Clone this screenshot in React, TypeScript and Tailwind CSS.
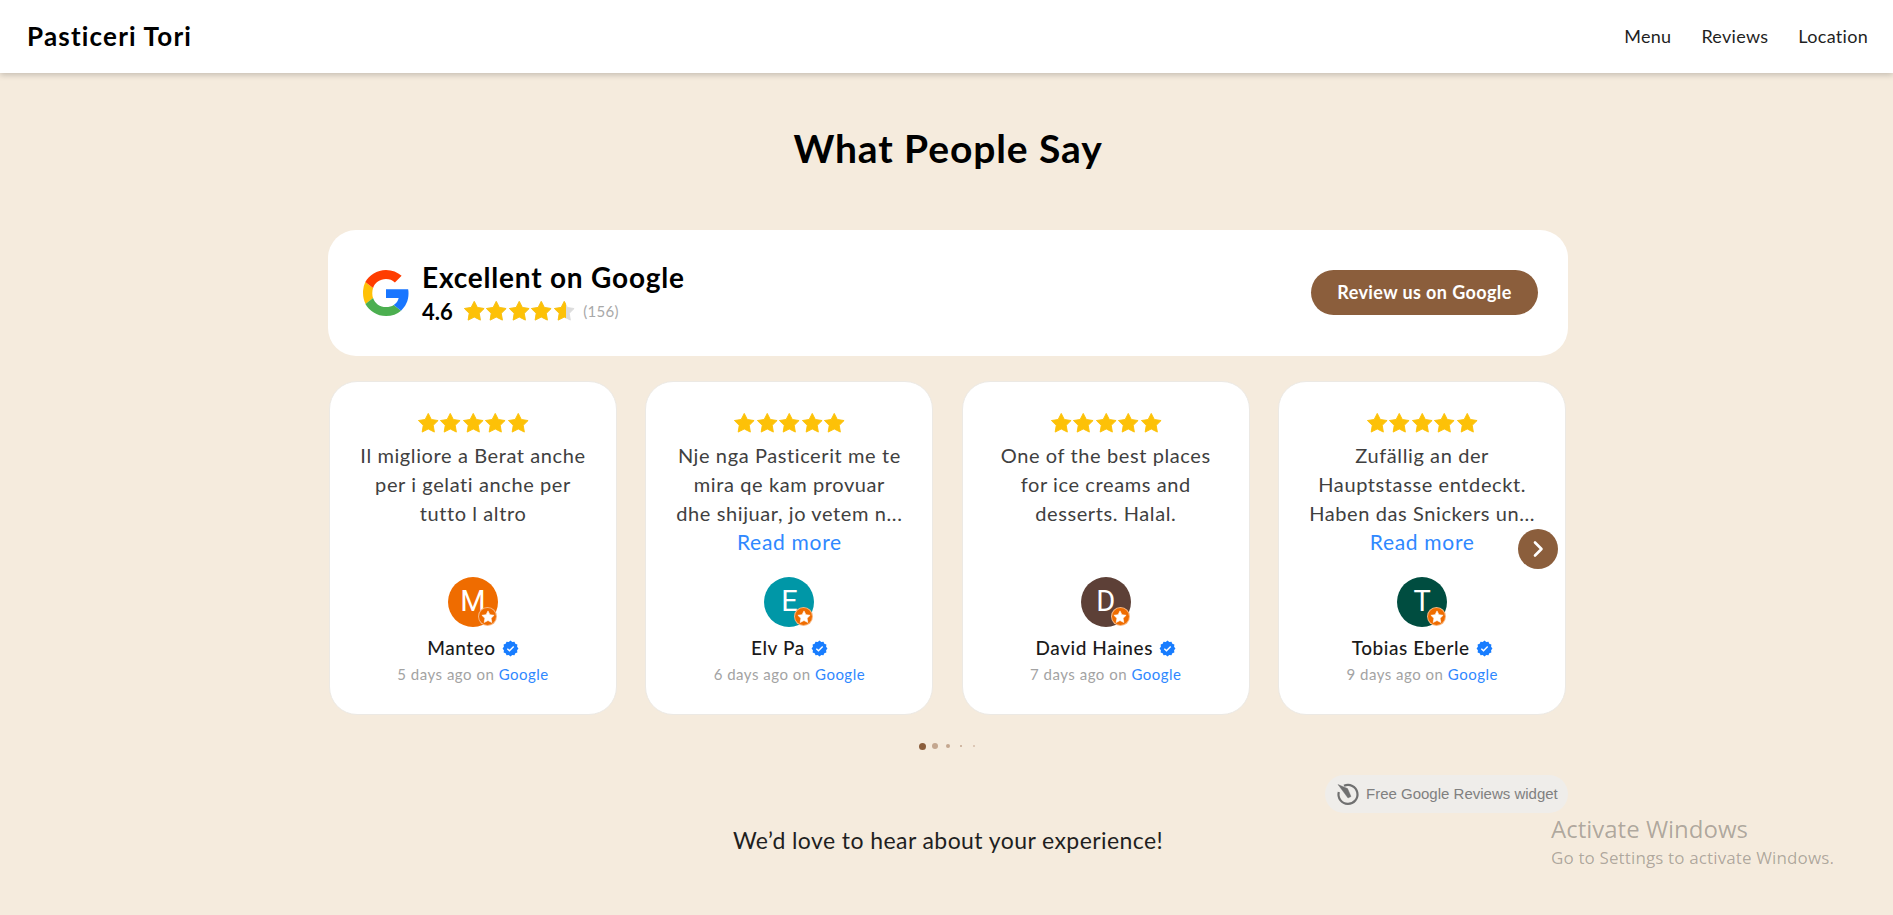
const F = "font-['Lato','Noto_Sans',sans-serif]";

function Star({ className = "" }: { className?: string }) {
  return (
    <svg viewBox="0 0 24 24" className={className} aria-hidden="true">
      <path
        d="M12 1.500L15.290 7.970 22.500 9.100 17.330 14.230 18.500 21.400 12 18.100 5.500 21.400 6.670 14.230 1.500 9.100 8.710 7.970z"
        fill="currentColor"
        stroke="currentColor"
        strokeWidth="1"
        strokeLinejoin="round"
      />
    </svg>
  );
}

function Stars() {
  return (
    <div className="flex justify-center text-[#fdc107] h-[24px]">
      {[0, 1, 2, 3, 4].map((i) => (
        <Star key={i} className="w-[22.500px] h-[22.500px]" />
      ))}
    </div>
  );
}

function GoogleG() {
  return (
    <svg viewBox="0 0 48 48" className="w-[46px] h-[46px] shrink-0">
      <path fill="#FFC107" d="M10.500 29.200A14.400 14.400 0 0 1 9.700 24c0-1.800.3-3.600.8-5.200L2.400 12.500A24 24 0 0 0 0 24c0 4.100 1 8 2.700 11.500z" />
      <path fill="#FF3D00" d="M24 9.500c3.600 0 6.800 1.200 9.300 3.600l7-7C36 2.300 30.500 0 24 0 14.600 0 6.500 5.400 2.400 12.500l8.100 6.300C12.400 13.300 17.700 9.500 24 9.500z" />
      <path fill="#4CAF50" d="M24 48c6.300 0 11.700-2 15.700-5.600l-7.600-5.900c-2.100 1.400-4.900 2.200-8.100 2.200-6.300 0-11.600-3.700-13.500-9.500l-8 6.200C6.500 42.400 14.600 48 24 48z" />
      <path fill="#1976FF" d="M47.500 24.500c0-1.600-.1-3.100-.4-4.500H24v9.100h13.200c-.6 3-2.300 5.500-5.100 7.400l7.600 5.900c4.500-4.100 7.800-10.200 7.800-17.900z" />
    </svg>
  );
}

function Verified() {
  return (
    <svg viewBox="0 0 24 24" className="w-[17px] h-[17px] shrink-0">
      <path
        fill="#187dff"
        d="M12 .8l2.500 1.900 3.100-.4 1.200 2.900 2.900 1.200-.4 3.100 1.900 2.500-1.900 2.500.4 3.100-2.900 1.200-1.200 2.900-3.100-.4-2.500 1.900-2.500-1.900-3.100.4-1.200-2.900-2.900-1.200.4-3.100L.8 12l1.900-2.500-.4-3.100 2.900-1.200 1.200-2.900 3.100.4z"
      />
      <path d="M7.500 12.300l3.100 3 5.900-6" fill="none" stroke="#fff" strokeWidth="2" />
    </svg>
  );
}

type R = { name: string; initial: string; color: string; when: string; lines: string[]; more?: boolean };

const reviews: R[] = [
  { name: "Manteo", initial: "M", color: "bg-[#ef6c00]", when: "5 days ago", lines: ["Il migliore a Berat anche", "per i gelati anche per", "tutto l altro"] },
  { name: "Elv Pa", initial: "E", color: "bg-[#0097a7]", when: "6 days ago", lines: ["Nje nga Pasticerit me te", "mira qe kam provuar", "dhe shijuar, jo vetem n..."], more: true },
  { name: "David Haines", initial: "D", color: "bg-[#5d4037]", when: "7 days ago", lines: ["One of the best places", "for ice creams and", "desserts. Halal."] },
  { name: "Tobias Eberle", initial: "T", color: "bg-[#004d40]", when: "9 days ago", lines: ["Zufällig an der", "Hauptstasse entdeckt.", "Haben das Snickers un..."], more: true },
];

function Card({ r }: { r: R }) {
  return (
    <div className="w-[288px] h-[334px] bg-white rounded-[28px] border border-[#ece9e4] pt-[30px] flex flex-col items-center text-center">
      <Stars />
      <div className="mt-[5px] h-[87px] text-[20px] leading-[29px] text-[#404040] tracking-[0.6px] whitespace-nowrap">
        {r.lines.map((l) => (
          <div key={l}>{l}</div>
        ))}
      </div>
      <div className="h-[28px] text-[21px] leading-[28px] text-[#2f88ff] tracking-[0.7px]">{r.more ? "Read more" : ""}</div>
      <div className={`relative mt-[21px] w-[50px] h-[50px] rounded-full ${r.color} flex items-center justify-center font-['Roboto',sans-serif] text-white text-[29px]`}>
        {r.initial}
        <div className="absolute right-[1px] bottom-[1px] w-[19px] h-[19px] rounded-full bg-[#ef6c00] border border-[#ffffff80] flex items-center justify-center text-white">
          <Star className="w-[14px] h-[14px]" />
        </div>
      </div>
      <div className="mt-[9px] flex items-center gap-[6px] text-[19px] leading-[24px] font-medium text-[#1a1a1a] tracking-[0.55px]">
        {r.name}
        <Verified />
      </div>
      <div className="mt-[4px] text-[15px] leading-[20px] text-[#a3a3a3] tracking-[0.5px]">
        {r.when} on <span className="text-[#2f88ff]">Google</span>
      </div>
    </div>
  );
}

export default function App() {
  return (
    <div className={`${F} relative h-[915px] overflow-hidden bg-[#f5ebdd] text-black`}>
      <header className="h-[73px] bg-white shadow-[0_2px_6px_rgba(0,0,0,0.2)] flex items-center justify-between pl-[27px] pr-[25px]">
        <div className="text-[26px] font-bold tracking-[1.2px]">Pasticeri Tori</div>
        <nav className="flex gap-[30px] text-[18px] text-[#1f1f1f] tracking-[0.3px]">
          <span>Menu</span>
          <span>Reviews</span>
          <span>Location</span>
        </nav>
      </header>

      <main className="flex flex-col items-center pl-[3px]">
        <h1 className="mt-[53px] text-[39px] leading-[44px] font-bold tracking-[0.9px]">What People Say</h1>

        <div className="mt-[60px] w-[1240px] h-[126px] bg-white rounded-[28px] flex items-center justify-between pl-[35px] pr-[30px]">
          <div className="flex items-center gap-[13px]">
            <GoogleG />
            <div>
              <div className="text-[28px] leading-[32px] font-bold tracking-[0.8px]">Excellent on Google</div>
              <div className="flex items-center h-[32px] pt-[4px]">
                <span className="text-[22px] font-bold mr-[10px]">4.6</span>
                <div className="relative flex text-[#dcdcdc]">
                  {[0, 1, 2, 3, 4].map((i) => (
                    <Star key={i} className="w-[22.500px] h-[22.500px]" />
                  ))}
                  <div className="absolute left-0 top-0 w-[103px] overflow-hidden flex text-[#fdc107]">
                    {[0, 1, 2, 3, 4].map((i) => (
                      <Star key={i} className="w-[22.500px] h-[22.500px] shrink-0" />
                    ))}
                  </div>
                </div>
                <span className="ml-[8px] text-[15px] text-[#a8a8a8] tracking-[0.3px]">(156)</span>
              </div>
            </div>
          </div>
          <div className="w-[227px] h-[45px] -mt-[2px] rounded-full bg-[#8b5e3c] text-white text-[18px] font-bold flex items-center justify-center tracking-[0.4px]">
            Review us on Google
          </div>
        </div>

        <div className="relative mt-[25px] w-[1240px] h-[334px] flex px-[1px] gap-[28.400px]">
          {reviews.map((r) => (
            <Card key={r.name} r={r} />
          ))}
          <div className="absolute left-[1190px] top-[148px] w-[40px] h-[40px] rounded-full bg-[#8b5e3c] flex items-center justify-center">
            <svg viewBox="0 0 24 24" className="w-[24px] h-[24px]" fill="none" stroke="#fff" strokeWidth="2.600" strokeLinecap="round" strokeLinejoin="round">
              <path d="M9 5.500l6.500 6.500L9 18.500" />
            </svg>
          </div>
        </div>

        <div className="mt-[27px] flex items-center gap-[5px] h-[8px]">
          <span className="w-[8px] flex justify-center"><span className="w-[7px] h-[7px] rounded-full bg-[#8b5e3c]" /></span>
          <span className="w-[8px] flex justify-center"><span className="w-[6px] h-[6px] rounded-full bg-[#c4a78f]" /></span>
          <span className="w-[8px] flex justify-center"><span className="w-[4px] h-[4px] rounded-full bg-[#c4a78f]" /></span>
          <span className="w-[8px] flex justify-center"><span className="w-[2px] h-[2px] rounded-full bg-[#c4a78f]" /></span>
          <span className="w-[8px] flex justify-center"><span className="w-[2px] h-[2px] rounded-full bg-[#d4bda9]" /></span>
        </div>

        <div className="mt-[25px] w-[1240px] flex justify-end">
          <div className="w-[243px] h-[38px] rounded-full bg-[#efedea] flex items-center pl-[11px] gap-[6px] font-['Liberation_Sans',sans-serif] text-[15px] text-[#808080]">
            <svg viewBox="0 0 24 24" className="w-[24px] h-[24px]" fill="none" stroke="#707070">
              <path d="M8 3.800A9.500 9.500 0 1 1 2.800 10" strokeWidth="2.200" />
              <path d="M2 2.500l9.500 4 3.500 8-3 1.500z" fill="#707070" strokeWidth="0.4" />
            </svg>
            Free Google Reviews widget
          </div>
        </div>

        <p className="mt-[12px] text-[23px] leading-[30px] text-[#1f1f1f] tracking-[0.42px]">We’d love to hear about your experience!</p>
      </main>

      <div className="absolute left-[1551px] top-[813px] font-['Open_Sans',sans-serif] text-[#0000004d]">
        <div className="text-[24px] leading-[32px]">Activate Windows</div>
        <div className="mt-[1px] text-[17px] leading-[23px] tracking-[0.13px]">Go to Settings to activate Windows.</div>
      </div>
    </div>
  );
}
